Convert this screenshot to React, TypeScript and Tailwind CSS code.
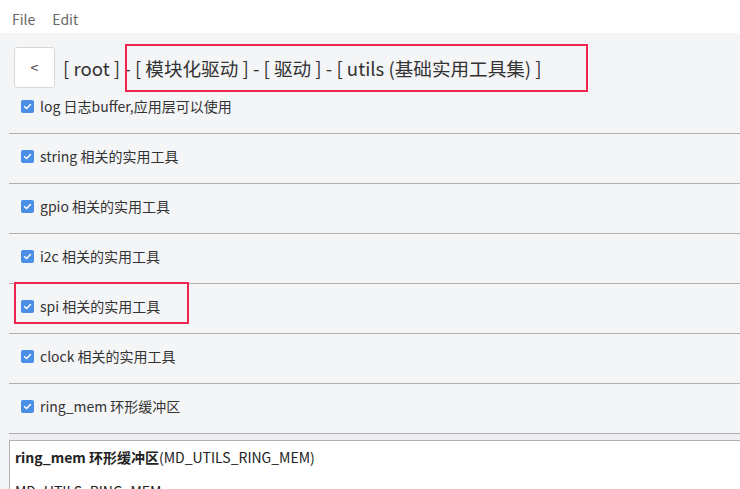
import React from "react";

const items = [
  "log 日志buffer,应用层可以使用",
  "string 相关的实用工具",
  "gpio 相关的实用工具",
  "i2c 相关的实用工具",
  "spi 相关的实用工具",
  "clock 相关的实用工具",
  "ring_mem 环形缓冲区",
];

function Check() {
  return (
    <span className="inline-flex items-center justify-center w-[13px] h-[13px] rounded-[2px] bg-[#4b8ee6] mr-[6px] shrink-0">
      <svg width="9" height="9" viewBox="0 0 10 10">
        <path d="M1.8 5.2 L4 7.3 L8.3 2.8" fill="none" stroke="white" strokeWidth="1.7" strokeLinecap="round" strokeLinejoin="round" />
      </svg>
    </span>
  );
}

export default function App() {
  return (
    <div
      className="w-[740px] h-[489px] overflow-hidden bg-[#f4f5f7] text-[#333] relative"
      style={{ fontFamily: '"Noto Sans CJK SC", "Noto Sans", sans-serif' }}
    >
      <div className="h-[33px] bg-white flex items-start pt-[9px] leading-[20px] text-[14px] text-[#666] pl-[12px] gap-[17px]">
        <span>File</span>
        <span>Edit</span>
      </div>
      <div className="pl-[9px]">
        <div className="flex items-center h-[59px] pl-[5px] pt-[14px] pb-[4px]">
          <button className="w-[41px] h-[41px] bg-white border border-[#d8d8d8] rounded-[3px] text-[14px] text-[#333] flex items-center justify-center">
            &lt;
          </button>
          <span className="ml-[8px] text-[18.6px] mt-[1px] text-[#333] whitespace-nowrap">
            [ root ] - [ 模块化驱动 ] - [ 驱动 ] - [ utils (基础实用工具集) ]
          </span>
        </div>
        {items.map((t, i) => (
          <div
            key={i}
            className={`flex items-center text-[14px] border-b border-[#b0b0b0] pl-[12px] ${i === 0 ? "h-[42px] pb-[13px]" : "h-[50px] pb-[4px]"}`}
          >
            <Check />
            <span>{t}</span>
          </div>
        ))}
        <div className="h-[6px] bg-[#eceef1]" />
        <div className="bg-white border border-[#b0b0b0] border-r-0 h-[60px] px-[5px] pt-[6px] text-[14px] text-[#222]">
          <div>
            <span className="font-bold">ring_mem 环形缓冲区</span>
            <span>(MD_UTILS_RING_MEM)</span>
          </div>
          <div className="mt-[13px]">MD_UTILS_RING_MEM:</div>
        </div>
      </div>
      <div className="absolute left-[125px] top-[44px] w-[463px] h-[48px] border-2 border-[#f0244e]" />
      <div className="absolute left-[14px] top-[282px] w-[175px] h-[42px] border-2 border-[#f0244e]" />
    </div>
  );
}
